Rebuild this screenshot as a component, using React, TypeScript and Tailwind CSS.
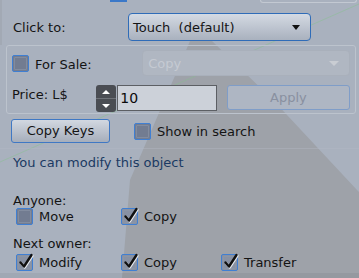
import React from "react";

function Check({ checked }: { checked?: boolean }) {
  return (
    <span
      className={
        "relative block w-[17px] h-[17px] shrink-0 rounded-[2px] border-[1.5px] border-[#3f7fd3] " +
        (checked ? "bg-[#8891a3]" : "bg-[#727c91]")
      }
    >
      <span className="absolute inset-[1px] rounded-[1px] border border-[#8e97a8]/60" />
      {checked && (
        <svg className="absolute left-[1px] top-[-2px]" width="16" height="17" viewBox="0 0 16 17">
          <path d="M2.5 9.5 L6 13.5 L13.5 2" fill="none" stroke="#e6e9ee" strokeWidth="2.6" strokeLinecap="round" strokeLinejoin="round" transform="translate(0.8,0.8)" />
          <path d="M2.5 9.5 L6 13.5 L13.5 2" fill="none" stroke="#111" strokeWidth="2.4" strokeLinecap="round" strokeLinejoin="round" />
        </svg>
      )}
    </span>
  );
}

function CheckLabel({ checked, label, className }: { checked?: boolean; label: string; className?: string }) {
  return (
    <div className={"flex items-center gap-[6px] " + (className ?? "")}>
      <Check checked={checked} />
      <span className="leading-[15px]">{label}</span>
    </div>
  );
}

export default function App() {
  return (
    <div className="relative w-[359px] h-[278px] overflow-hidden bg-[#a9b1be] font-['DejaVu_Sans',sans-serif] text-[13px] text-[#141414]">
      <svg className="absolute inset-0" width="359" height="278" viewBox="0 0 359 278">
        <rect x="0" y="0" width="2" height="45" fill="#a2a9b4" />
        <polygon points="190,41 212,41 273,100 357,190 359,192 359,278 122,278 130,180" fill="#9ea2a9" />
        <line x1="0" y1="162" x2="359" y2="4" stroke="#86c48c" strokeOpacity="0.45" strokeWidth="1" />
        <rect x="0" y="273" width="359" height="5" fill="#000" fillOpacity="0.05" />
      </svg>

      <div className="relative flex flex-col">
        {/* remnants of elements above */}
        <div className="flex h-[3px] items-start">
          <div className="ml-[110px] w-[17px] h-[2px] bg-[#3b78c8]" />
          <div className="ml-[133px] w-[97px] h-[3px] border border-t-0 border-[#c3c9d2] rounded-b-[3px]" />
        </div>

        {/* Click to */}
        <div className="mt-[10px] flex h-[28px] items-center">
          <span className="w-[128px] pl-[13px] leading-[15px]">Click to:</span>
          <div className="flex h-[28px] w-[183px] items-center justify-between rounded-[4px] border-[1.5px] border-[#2f6cb8] bg-gradient-to-b from-[#d4dae3] to-[#a9b1be] pl-[4px] pr-[10px]">
            <span className="whitespace-pre leading-[15px]">Touch  (default)</span>
            <span className="h-0 w-0 border-x-[4px] border-t-[5px] border-x-transparent border-t-[#111]" />
          </div>
        </div>

        {/* For sale panel */}
        <div className="mt-[4px] ml-[6px] mr-[3px] flex flex-col rounded-[3px] border border-[#bcc3cd] px-[5px] pt-[4px] pb-[1px]">
          <div className="flex h-[26px] items-center">
            <div className="flex w-[131px] items-center gap-[6px]">
              <Check />
              <span className="pt-[2px] leading-[15px]">For Sale:</span>
            </div>
            <div className="flex h-[26px] w-[209px] items-center justify-between rounded-[4px] border border-[#a9b0bb] bg-[#b0b7c2] pl-[5px] pr-[10px]">
              <span className="leading-[15px] text-[#c5cad2]">Copy</span>
              <span className="h-0 w-0 border-x-[5px] border-t-[5px] border-x-transparent border-t-[#c9cdd3]" />
            </div>
          </div>
          <div className="mt-[9px] flex h-[27px] items-start">
            <span className="w-[85px] pt-[2px] leading-[15px]">Price: L$</span>
            <div className="flex h-[27px] w-[20px] flex-col rounded-[3px] bg-[#4a4d53]">
              <div className="flex flex-1 items-center justify-center border-b border-[#6e7278]">
                <span className="h-0 w-0 border-x-[4px] border-b-[4px] border-x-transparent border-b-white" />
              </div>
              <div className="flex flex-1 items-center justify-center">
                <span className="h-0 w-0 border-x-[4px] border-t-[4px] border-x-transparent border-t-white" />
              </div>
            </div>
            <div className="ml-[1px] flex h-[26px] w-[100px] items-center border border-[#5c5f64] bg-[#ccd1d9] pl-[2px] text-[14px] text-[#0a0a0a]">
              10
            </div>
            <div className="ml-[10px] flex h-[25px] w-[124px] items-center justify-center rounded-[3px] border border-[#7f9dc8] bg-[#aeb6c3] text-[#8990a0]">
              Apply
            </div>
          </div>
        </div>

        {/* Copy keys row */}
        <div className="mt-[5px] flex h-[24px] items-center">
          <div className="ml-[11px] flex h-[24px] w-[99px] items-center justify-center rounded-[3px] border border-[#3f78c4] bg-gradient-to-b from-[#d2d8e1] to-[#a6aebb]">
            Copy Keys
          </div>
          <div className="ml-[24px] flex items-center gap-[6px]">
            <Check />
            <span className="leading-[15px]">Show in search</span>
          </div>
        </div>

        <div className="mt-[5px] h-px bg-[#b3bac5]/40" />

        <div className="mt-[6px] pl-[13px] leading-[15px] text-[#1b3a63]">You can modify this object</div>

        <div className="mt-[23px] pl-[13px] leading-[15px]">Anyone:</div>
        <div className="flex h-[16px] items-center pl-[16px]">
          <CheckLabel label="Move" className="w-[105px]" />
          <CheckLabel label="Copy" checked />
        </div>

        <div className="mt-[12px] pl-[13px] leading-[15px]">Next owner:</div>
        <div className="mt-[3px] flex h-[16px] items-center pl-[16px]">
          <CheckLabel label="Modify" checked className="w-[105px]" />
          <CheckLabel label="Copy" checked className="w-[100px]" />
          <CheckLabel label="Transfer" checked />
        </div>
      </div>
    </div>
  );
}
